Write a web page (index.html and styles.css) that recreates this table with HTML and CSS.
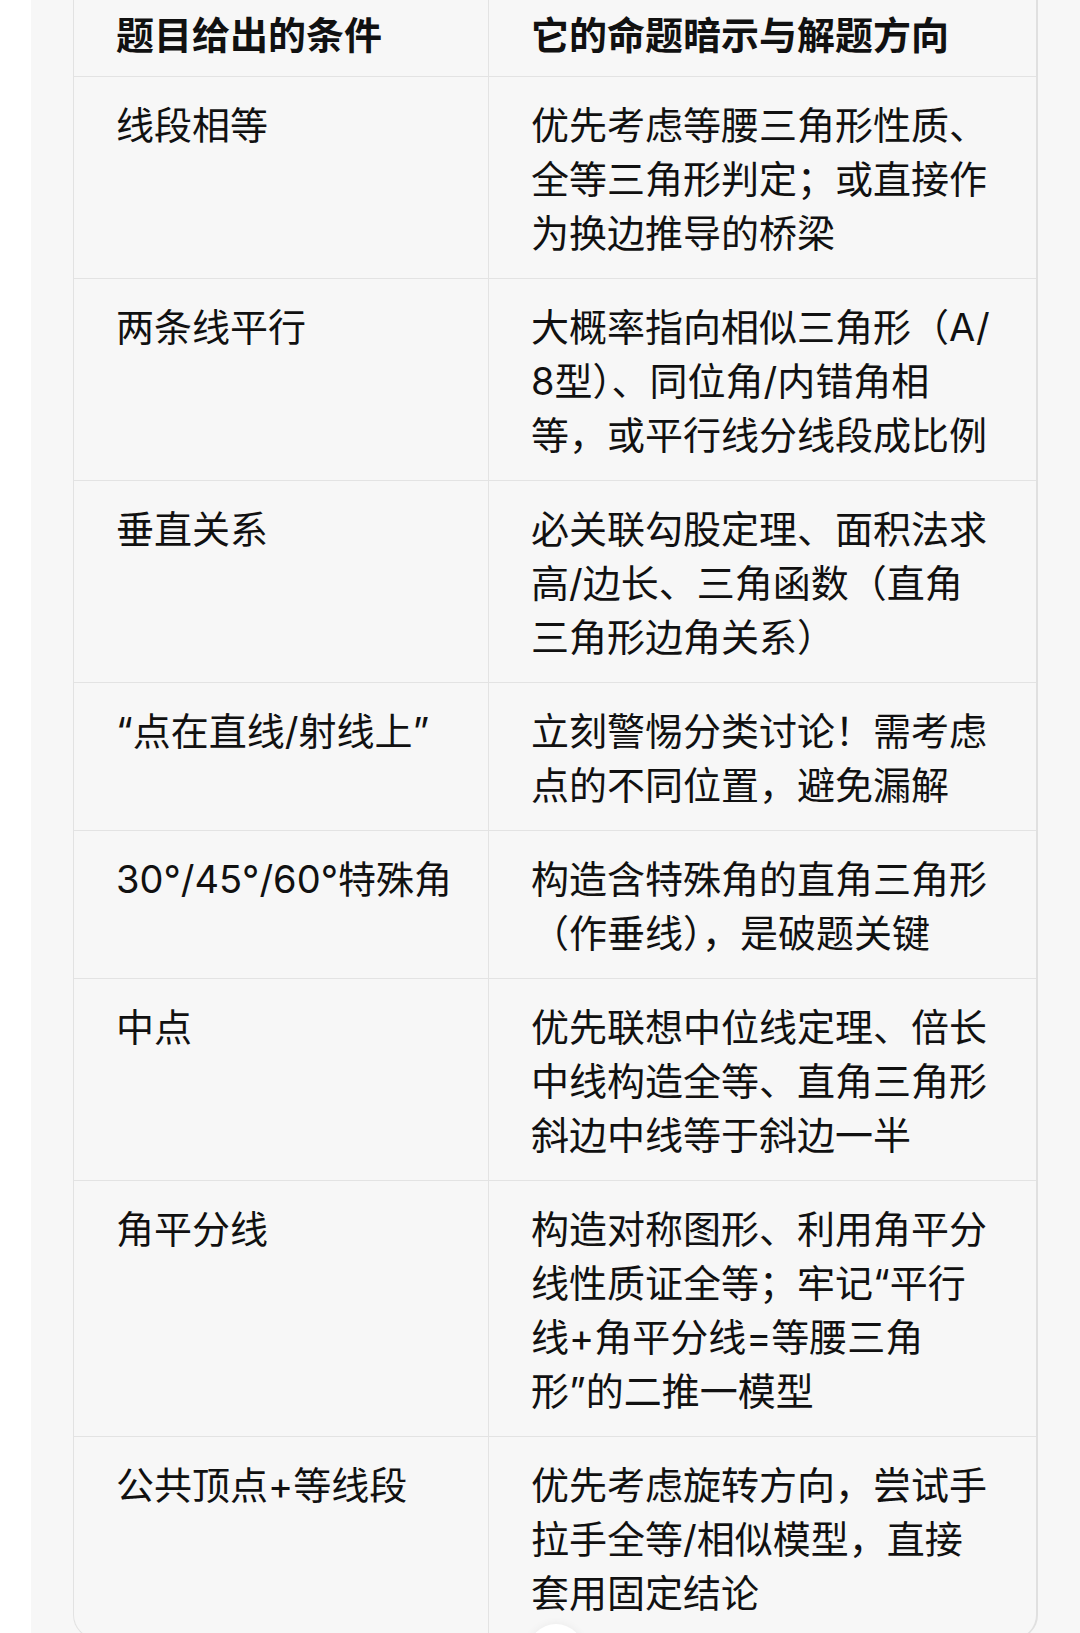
FILE: index.html
```html
<!DOCTYPE html>
<html lang="zh-CN">
<head>
<meta charset="utf-8">
<title>题目条件与解题方向</title>
<link rel="stylesheet" href="styles.css">
</head>
<body>
<div class="page">
  <div class="table">
    <div class="cell head c1">题目给出的条件</div>
    <div class="cell head c2">它的命题暗示与解题方向</div>

    <div class="cell c1">线段相等</div>
    <div class="cell c2">优先考虑等腰三角形性质、全等三角形判定；或直接作为换边推导的桥梁</div>

    <div class="cell c1">两条线平行</div>
    <div class="cell c2">大概率指向相似三角形（A/&#8203;8型）、同位角/内错角相等，或平行线分线段成比例</div>

    <div class="cell c1">垂直关系</div>
    <div class="cell c2">必关联勾股定理、面积法求高/边长、三角函数（直角三角形边角关系）</div>

    <div class="cell c1">“点在直线/射线上”</div>
    <div class="cell c2">立刻警惕分类讨论！需考虑点的不同位置，避免漏解</div>

    <div class="cell c1">30°/45°/60°特殊角</div>
    <div class="cell c2">构造含特殊角的直角三角形（作垂线），是破题关键</div>

    <div class="cell c1">中点</div>
    <div class="cell c2">优先联想中位线定理、倍长中线构造全等、直角三角形斜边中线等于斜边一半</div>

    <div class="cell c1">角平分线</div>
    <div class="cell c2">构造对称图形、利用角平分线性质证全等；牢记“平行线+角平分线=等腰三角形”的二推一模型</div>

    <div class="cell c1 last">公共顶点+等线段</div>
    <div class="cell c2 last">优先考虑旋转方向，尝试手拉手全等/相似模型，直接套用固定结论</div>
  </div>
  <div class="scroll-btn"></div>
</div>
</body>
</html>
```

FILE: styles.css
```css
html, body {
  margin: 0;
  padding: 0;
  background: #ffffff;
  overflow: hidden;
}

.page {
  position: relative;
  margin-left: 31px;
  height: 1633px;
  background: #f7f7f7;
  padding-left: 42px;
  overflow: hidden;
  font-family: Inter, "Noto Sans CJK SC", sans-serif;
  color: #111111;
}

.table {
  width: 965px;
  box-sizing: border-box;
  display: grid;
  grid-template-columns: 415px 1fr;
  border-left: 1px solid #e2e2e2;
  border-right: 2px solid #e0e0e0;
  border-bottom: 1px solid #e2e2e2;
  border-radius: 0 0 24px 24px;
  background: #f7f7f7;
  overflow: hidden;
}

.cell {
  font-size: 38px;
  line-height: 54px;
  padding: 21px 40px 18px 42px;
  border-bottom: 1px solid #e3e3e3;
  word-break: normal;
  line-break: strict;
}

.c1 {
  border-right: 1px solid #e3e3e3;
  padding-right: 16px;
}

.head {
  font-weight: 600;
  padding-top: 8px;
  padding-bottom: 14px;
}

.last {
  border-bottom: none;
}

.scroll-btn {
  position: absolute;
  left: 497px;
  top: 1624px;
  width: 56px;
  height: 56px;
  border-radius: 50%;
  background: #ffffff;
  box-shadow: 0 0 10px rgba(0, 0, 0, 0.06);
}
```
